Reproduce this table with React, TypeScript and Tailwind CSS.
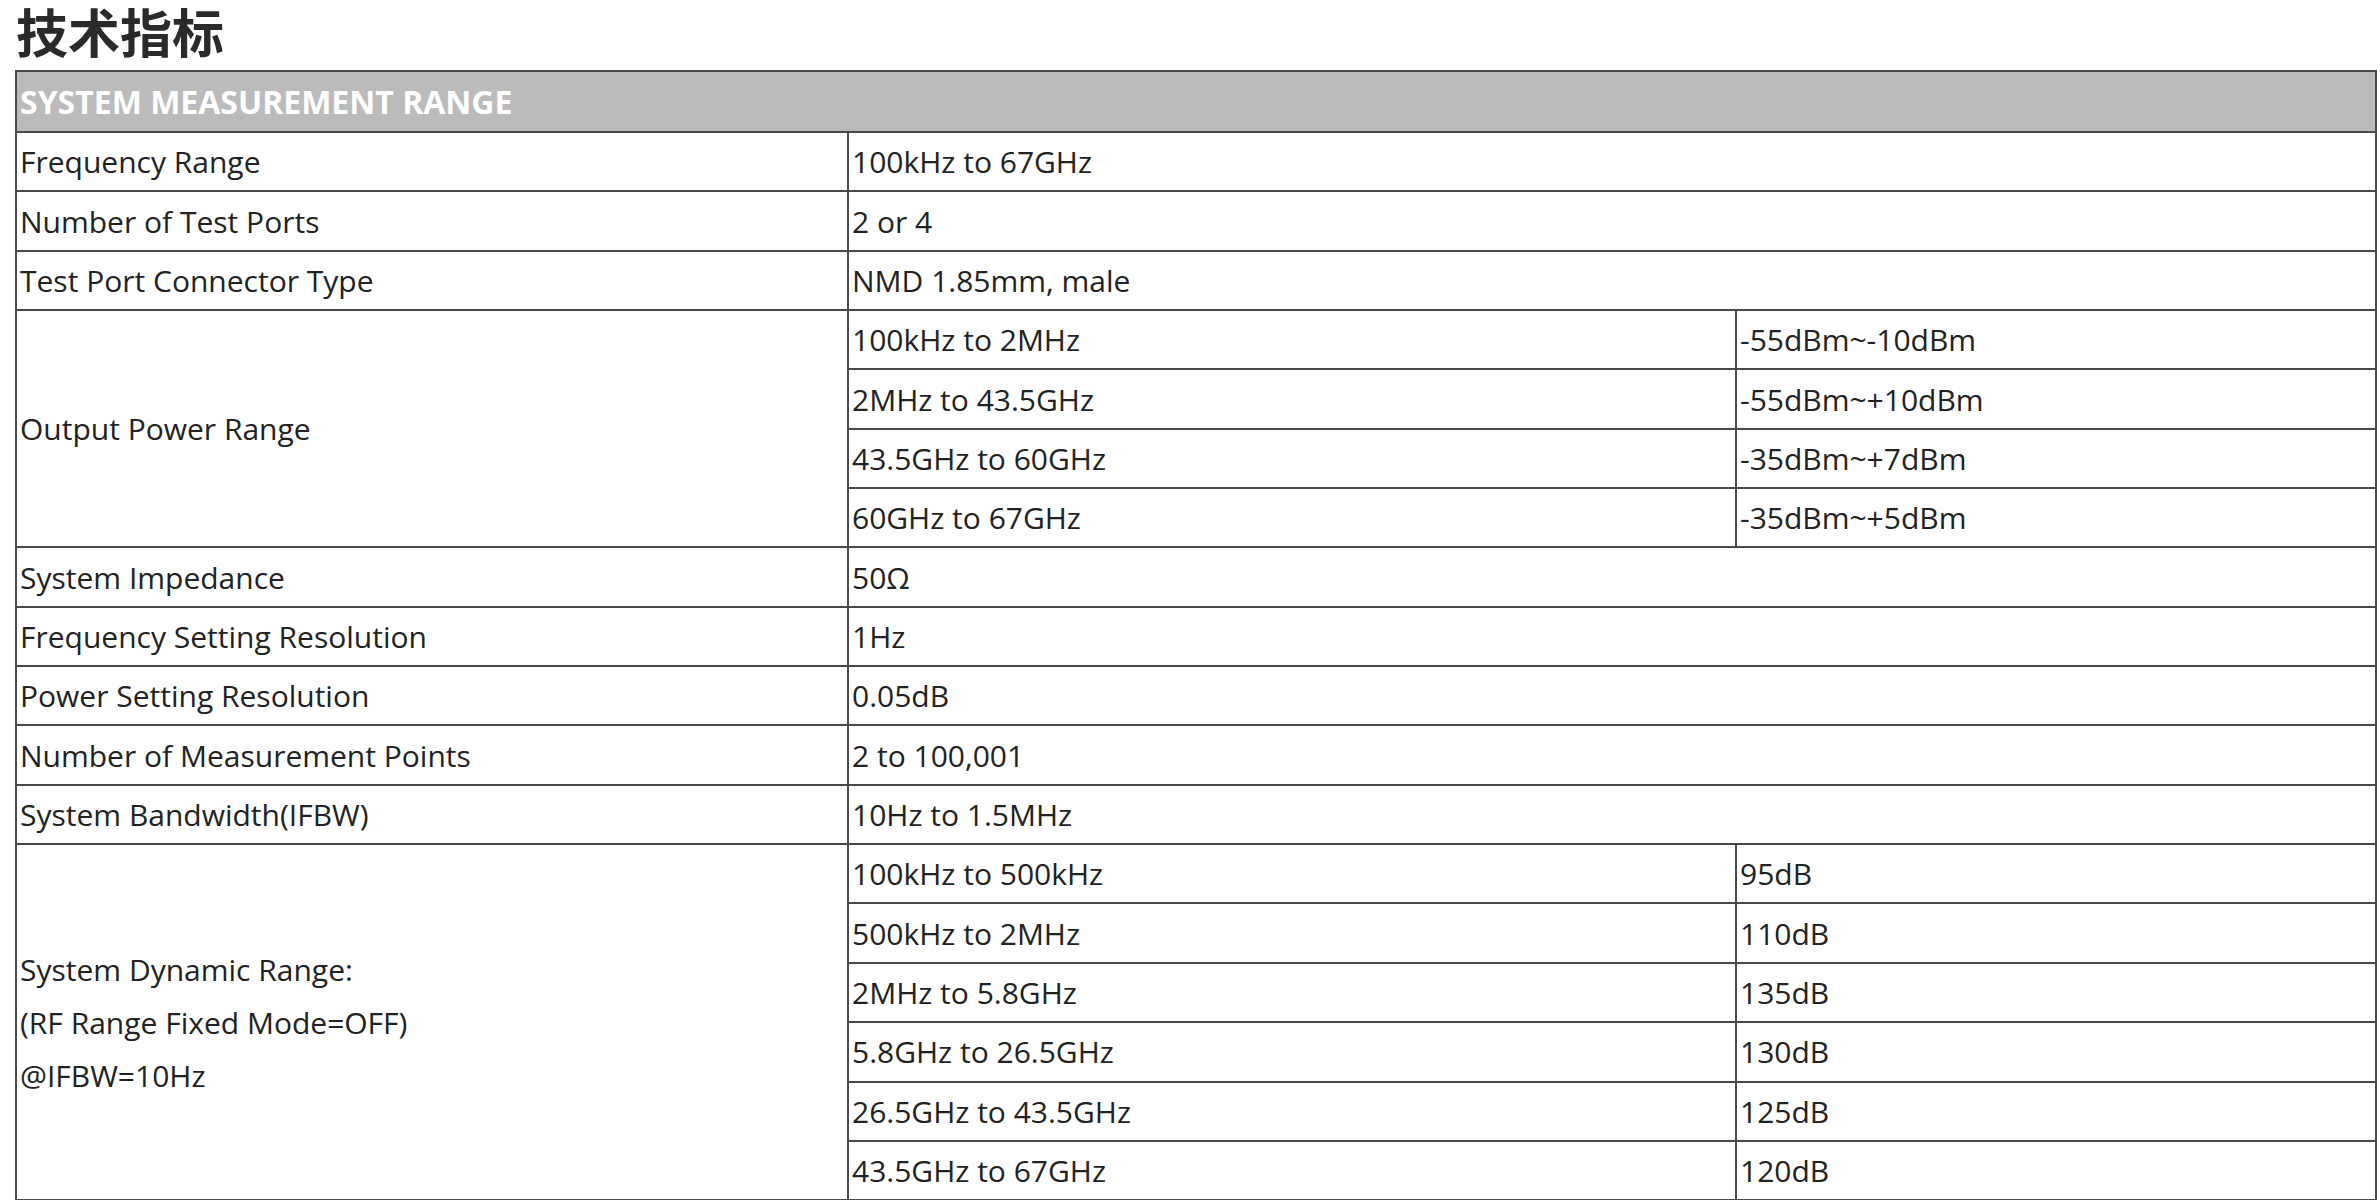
const font = "font-['Open_Sans','Noto_Sans',sans-serif]";

type Sub = [string, string];
type Row =
  | { label: string; value: string }
  | { label: string[]; subs: Sub[] };

const rows: Row[] = [
  { label: "Frequency Range", value: "100kHz to 67GHz" },
  { label: "Number of Test Ports", value: "2 or 4" },
  { label: "Test Port Connector Type", value: "NMD 1.85mm, male" },
  {
    label: ["Output Power Range"],
    subs: [
      ["100kHz to 2MHz", "-55dBm~-10dBm"],
      ["2MHz to 43.5GHz", "-55dBm~+10dBm"],
      ["43.5GHz to 60GHz", "-35dBm~+7dBm"],
      ["60GHz to 67GHz", "-35dBm~+5dBm"],
    ],
  },
  { label: "System Impedance", value: "50Ω" },
  { label: "Frequency Setting Resolution", value: "1Hz" },
  { label: "Power Setting Resolution", value: "0.05dB" },
  { label: "Number of Measurement Points", value: "2 to 100,001" },
  { label: "System Bandwidth(IFBW)", value: "10Hz to 1.5MHz" },
  {
    label: ["System Dynamic Range:", "(RF Range Fixed Mode=OFF)", "@IFBW=10Hz"],
    subs: [
      ["100kHz to 500kHz", "95dB"],
      ["500kHz to 2MHz", "110dB"],
      ["2MHz to 5.8GHz", "135dB"],
      ["5.8GHz to 26.5GHz", "130dB"],
      ["26.5GHz to 43.5GHz", "125dB"],
      ["43.5GHz to 67GHz", "120dB"],
    ],
  },
];

const cell = "border-2 border-[#4a4a4a] px-[3px] h-[59.35px] align-middle text-left";

export default function App() {
  return (
    <div className={`bg-white min-h-screen pl-[15px] text-[#222] ${font}`}>
      <h1 className="font-['Noto_Sans_CJK_SC',sans-serif] text-[52px] font-bold leading-[62px] text-[#2a2a2a] pl-[1px]">
        技术指标
      </h1>
      <table className="mt-[8px] w-[2362px] border-collapse text-[30px] table-fixed">
        <colgroup>
          <col className="w-[832px]" />
          <col className="w-[888px]" />
          <col />
        </colgroup>
        <tbody>
          <tr>
            <th colSpan={3} className={`${cell} h-[61px] bg-[#bbbbbb] text-[32px] text-white font-bold`}>
              SYSTEM MEASUREMENT RANGE
            </th>
          </tr>
          {rows.map((r, i) =>
            "value" in r ? (
              <tr key={i}>
                <td className={cell}>{r.label}</td>
                <td colSpan={2} className={cell}>
                  {r.value}
                </td>
              </tr>
            ) : (
              r.subs.map((s, j) => (
                <tr key={`${i}-${j}`}>
                  {j === 0 && (
                    <td rowSpan={r.subs.length} className={`${cell} leading-[53px]`}>
                      {r.label.map((l) => (
                        <div key={l}>{l}</div>
                      ))}
                    </td>
                  )}
                  <td className={cell}>{s[0]}</td>
                  <td className={cell}>{s[1]}</td>
                </tr>
              ))
            )
          )}
        </tbody>
      </table>
    </div>
  );
}
